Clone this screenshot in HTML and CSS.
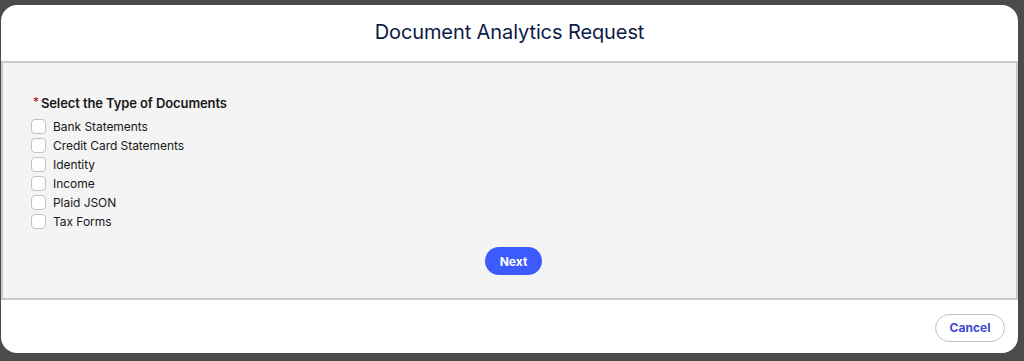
FILE: index.html
```html
<!DOCTYPE html>
<html>
<head>
<meta charset="utf-8">
<link rel="stylesheet" href="styles.css">
</head>
<body>
<div class="modal">
  <header class="modal-header">
    <h1 class="modal-title">Document Analytics Request</h1>
  </header>
  <section class="modal-body">
    <fieldset class="field">
      <legend class="field-label"><abbr class="required">*</abbr>Select the Type of Documents</legend>
      <ul class="options">
        <li class="option"><span class="box"></span><span class="opt-label">Bank Statements</span></li>
        <li class="option"><span class="box"></span><span class="opt-label">Credit Card Statements</span></li>
        <li class="option"><span class="box"></span><span class="opt-label">Identity</span></li>
        <li class="option"><span class="box"></span><span class="opt-label">Income</span></li>
        <li class="option"><span class="box"></span><span class="opt-label">Plaid JSON</span></li>
        <li class="option"><span class="box"></span><span class="opt-label">Tax Forms</span></li>
      </ul>
    </fieldset>
    <div class="actions">
      <button class="btn-brand">Next</button>
    </div>
  </section>
  <footer class="modal-footer">
    <button class="btn-neutral">Cancel</button>
  </footer>
</div>
</body>
</html>
```

FILE: styles.css
```css
* { box-sizing: border-box; }
html, body { margin: 0; padding: 0; }
body {
  background: #4b4b4b;
  width: 1024px;
  height: 361px;
  padding: 5px 0 0 1px;
  font-family: "Inter", "Liberation Sans", sans-serif;
  color: #181818;
  overflow: hidden;
}
.modal {
  width: 1017px;
  height: 348px;
  background: #fff;
  border-radius: 16px;
  overflow: hidden;
  display: flex;
  flex-direction: column;
}
.modal-header {
  height: 58px;
  border-bottom: 2px solid #c9c9c9;
  display: flex;
  align-items: center;
  justify-content: center;
  padding-bottom: 2px;
}
.modal-title {
  margin: 0;
  font-size: 20px;
  font-weight: 400;
  color: #0c1a47;
  letter-spacing: -0.1px;
}
.modal-body {
  height: 237px;
  background: #f4f4f4;
  border-left: 2px solid #c9c9c9;
  border-right: 2px solid #c9c9c9;
  border-bottom: 2px solid #c9c9c9;
  padding: 32px 28px 0 28px;
}
.field {
  border: 0;
  margin: 0;
  padding: 0;
}
.field-label {
  padding: 0 0 0 2px;
  font-size: 13px;
  font-weight: 600;
  color: #181818;
  line-height: 16px;
  margin-bottom: 6px;
  display: flex;
  align-items: center;
  letter-spacing: -0.1px;
}
.required {
  color: #ba0517;
  text-decoration: none;
  font-weight: 400;
  margin-right: 2px;
  font-size: 12px;
  position: relative;
  top: -1px;
}
.options {
  list-style: none;
  margin: 0;
  padding: 0;
}
.option {
  display: flex;
  align-items: center;
  height: 19px;
  font-size: 12px;
  color: #181818;
  letter-spacing: -0.05px;
}
.box {
  width: 15px;
  height: 15px;
  border: 1px solid #c3c3c3;
  border-radius: 4px;
  background: #fff;
  margin-right: 7px;
}
.actions {
  display: flex;
  justify-content: center;
  padding-left: 8px;
  margin-top: 16px;
}
.btn-brand {
  height: 28px;
  width: 57px;
  border: 0;
  border-radius: 14px;
  background: #3c5bfd;
  color: #fff;
  font-family: inherit;
  font-weight: 700;
  font-size: 12px;
}
.modal-footer {
  flex: 1;
  display: flex;
  justify-content: flex-end;
  align-items: center;
  padding-right: 13px;
  padding-top: 2px;
}
.btn-neutral {
  height: 28px;
  width: 70px;
  border: 1px solid #c3c3c3;
  border-radius: 14px;
  background: #fff;
  color: #3a49d8;
  font-family: inherit;
  font-weight: 700;
  font-size: 12px;
}
```
